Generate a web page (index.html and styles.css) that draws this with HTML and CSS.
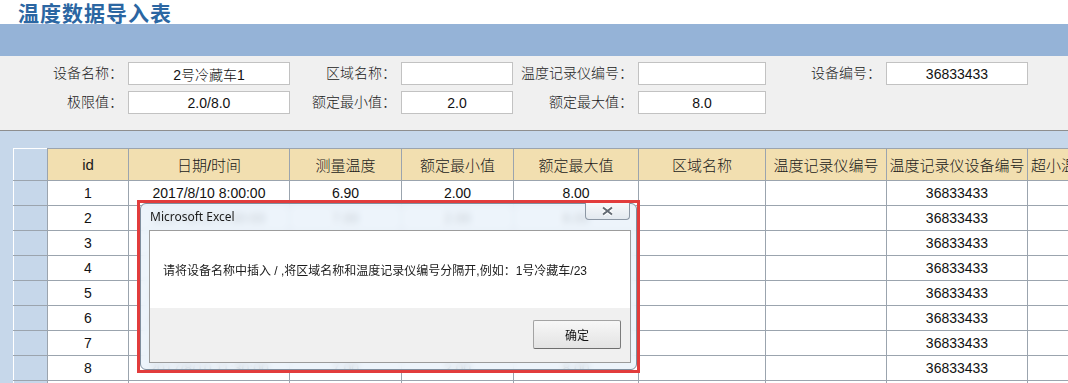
FILE: index.html
```html
<!DOCTYPE html>
<html>
	<head>
		<meta charset="utf-8">
		<title>温度数据导入表</title>
		<link rel="stylesheet" href="styles.css">
	</head>
	<body>

		<div class="title">温度数据导入表</div>
		<div class="band"></div>

		<form class="filter" name="head-form">
			<label>设备名称：</label><input type="text" value="2号冷藏车1">
			<label>区域名称：</label><input type="text" value="">
			<label>温度记录仪编号：</label><input type="text" value="">
			<label>设备编号：</label><input type="text" value="36833433">
			<label>极限值：</label><input type="text" value="2.0/8.0">
			<label>额定最小值：</label><input type="text" value="2.0">
			<label>额定最大值：</label><input type="text" value="8.0">
		</form>

		<div class="sheet">
			<table class="grid">
				<colgroup>
					<col class="c-rh"><col class="c-id"><col class="c-date"><col class="c-num"><col class="c-num">
					<col class="c-max"><col class="c-area"><col class="c-rec"><col class="c-dev"><col class="c-last">
				</colgroup>
				<tr>
					<th class="rh"></th><th>id</th><th>日期/时间</th><th>测量温度</th><th>额定最小值</th>
					<th>额定最大值</th><th>区域名称</th><th>温度记录仪编号</th><th>温度记录仪设备编号</th><th class="last">超小温度报警</th>
				</tr>
				<tr><td class="rh"></td><td>1</td><td>2017/8/10 8:00:00</td><td>6.90</td><td>2.00</td><td>8.00</td><td></td><td></td><td>36833433</td><td></td></tr>
				<tr><td class="rh"></td><td>2</td><td>2017/8/10 8:30:00</td><td>7.00</td><td>2.00</td><td>8.00</td><td></td><td></td><td>36833433</td><td></td></tr>
				<tr><td class="rh"></td><td>3</td><td>2017/8/10 9:00:00</td><td>7.10</td><td>2.00</td><td>8.00</td><td></td><td></td><td>36833433</td><td></td></tr>
				<tr><td class="rh"></td><td>4</td><td>2017/8/10 9:30:00</td><td>7.00</td><td>2.00</td><td>8.00</td><td></td><td></td><td>36833433</td><td></td></tr>
				<tr><td class="rh"></td><td>5</td><td>2017/8/10 10:00:00</td><td>6.80</td><td>2.00</td><td>8.00</td><td></td><td></td><td>36833433</td><td></td></tr>
				<tr><td class="rh"></td><td>6</td><td>2017/8/10 10:30:00</td><td>6.90</td><td>2.00</td><td>8.00</td><td></td><td></td><td>36833433</td><td></td></tr>
				<tr><td class="rh"></td><td>7</td><td>2017/8/10 11:00:00</td><td>7.20</td><td>2.00</td><td>8.00</td><td></td><td></td><td>36833433</td><td></td></tr>
				<tr><td class="rh"></td><td>8</td><td>2017/8/10 11:30:00</td><td>7.00</td><td>2.00</td><td>8.00</td><td></td><td></td><td>36833433</td><td></td></tr>
				<tr><td class="rh"></td><td>9</td><td>2017/8/10 12:00:00</td><td>6.90</td><td>2.00</td><td>8.00</td><td></td><td></td><td>36833433</td><td></td></tr>
			</table>

			<!-- message box, with the red highlight around it -->
			<div class="mark">
				<div class="msgbox">
					<div class="cap">Microsoft Excel</div>
					<div class="close">
						<svg width="13" height="10" viewBox="0 0 13 10">
							<path d="M2 1.5 L11 8.5 M11 1.5 L2 8.5" stroke="#fff" stroke-width="4" fill="none"/>
							<path d="M2 1.5 L11 8.5 M11 1.5 L2 8.5" stroke="#626a73" stroke-width="2" fill="none"/>
						</svg>
					</div>
					<div class="panel">
						<div class="text">请将设备名称中插入 / ,将区域名称和温度记录仪编号分隔开,例如：1号冷藏车/23</div>
						<div class="foot"><button type="button">确定</button></div>
					</div>
				</div>
			</div>
		</div>

	</body>
</html>
```

FILE: styles.css
```css
html, body {
	margin: 0;
	height: 100%;
	overflow: hidden;
}
body {
	font-family: "Liberation Sans", "Noto Sans CJK SC", sans-serif;
	color: #111;
	background: #c6d7ea;
}

.title {
	height: 24px;
	line-height: 24px;
	padding-left: 18px;
	background: #fff;
	color: #2b66a2;
	font: bold 21px/24px "Noto Sans CJK SC", sans-serif;
	letter-spacing: 1px;
}
.band { height: 32px; background: #95b3d7; }

.filter {
	display: grid;
	grid-template-columns: 128px 162px 111px 112px 125px 128px 120px 142px;
	grid-auto-rows: 23px;
	row-gap: 6px;
	align-content: start;
	height: 75px;
	box-sizing: border-box;
	padding-top: 6px;
	margin: 0;
	background: #f0f0f0;
	border-bottom: 1px solid #8e8e8e;
}
.filter label {
	font-size: 14px;
	font-weight: 300;
	line-height: 23px;
	text-align: right;
	padding-right: 5px;
	white-space: nowrap;
	color: #1a1a1a;
}
.filter input {
	box-sizing: border-box;
	width: 100%;
	height: 23px;
	margin: 0;
	padding: 0;
	border: 1px solid #c2c2c2;
	background: #fff;
	color: #111;
	font: 300 14px "Liberation Sans", "Noto Sans CJK SC", sans-serif;
	text-align: center;
	outline: none;
}

.sheet {
	position: relative;
	height: calc(100% - 131px);
	box-sizing: border-box;
	padding: 17px 0 0 13px;
	overflow: hidden;
}

.grid {
	border-collapse: collapse;
	table-layout: fixed;
	width: 1114px;
}
.c-rh { width: 34px; }
.c-id { width: 81px; }
.c-date { width: 161px; }
.c-num { width: 112px; }
.c-max { width: 125px; }
.c-area { width: 127px; }
.c-rec { width: 121px; }
.c-dev { width: 141px; }
.c-last { width: 100px; }

.grid th, .grid td {
	border: 1px solid #9ba4ae;
	padding: 0;
	text-align: center;
	white-space: nowrap;
	overflow: hidden;
}
.grid th {
	height: 31px;
	background: #f2dfb0;
	font-weight: 300;
	font-size: 15px;
	color: #1a1a1a;
}
.grid td {
	height: 24px;
	background: #fff;
	font-size: 14px;
}
.grid .rh { background: #c6d7ea; border-left-color: #fff; }
.grid th.rh { border-top-color: #fff; }
.grid th.last { text-align: left; padding-left: 3px; }

.mark {
	position: absolute;
	left: 137px;
	top: 69px;
	width: 503px;
	height: 173px;
	box-sizing: border-box;
	border: 3px solid #e23c3c;
}
.msgbox {
	position: relative;
	height: 100%;
	box-sizing: border-box;
	display: flex;
	flex-direction: column;
	padding: 0 5px 6px 8px;
	border: 1px solid #7f8e9e;
	border-radius: 6px;
	background: rgba(234, 242, 250, 0.84);
	backdrop-filter: blur(3px);
}
.cap {
	height: 26px;
	line-height: 26px;
	padding-left: 1px;
	font: 12px/26px "Noto Sans", sans-serif;
	color: #1b1b1b;
}
.close {
	position: absolute;
	top: -1px;
	right: 6px;
	width: 45px;
	height: 17px;
	box-sizing: border-box;
	border: 1px solid #8c97a4;
	border-top: none;
	border-radius: 0 0 4px 4px;
	background: linear-gradient(#f7f9fb, #e3e9ef);
	display: flex;
	align-items: center;
	justify-content: center;
}
.panel {
	flex: 1;
	display: flex;
	flex-direction: column;
	border: 1px solid #9c9c9c;
	background: #f0f0f0;
}
.text {
	height: 77px;
	box-sizing: border-box;
	padding: 32px 0 0 13px;
	background: #fff;
	font-size: 12px;
	line-height: 16px;
	color: #1b1b1b;
}
.foot {
	flex: 1;
	display: flex;
	justify-content: flex-end;
	align-items: flex-start;
	padding: 12px 9px 0 0;
}
.foot button {
	width: 88px;
	height: 29px;
	border: 1px solid #a3a3a3;
	border-right-color: #7c7c7c;
	border-bottom-color: #6e6e6e;
	border-radius: 2px;
	background: linear-gradient(#f7f7f7, #e3e3e3);
	font: 12px "Liberation Sans", "Noto Sans CJK SC", sans-serif;
	color: #111;
}
```
